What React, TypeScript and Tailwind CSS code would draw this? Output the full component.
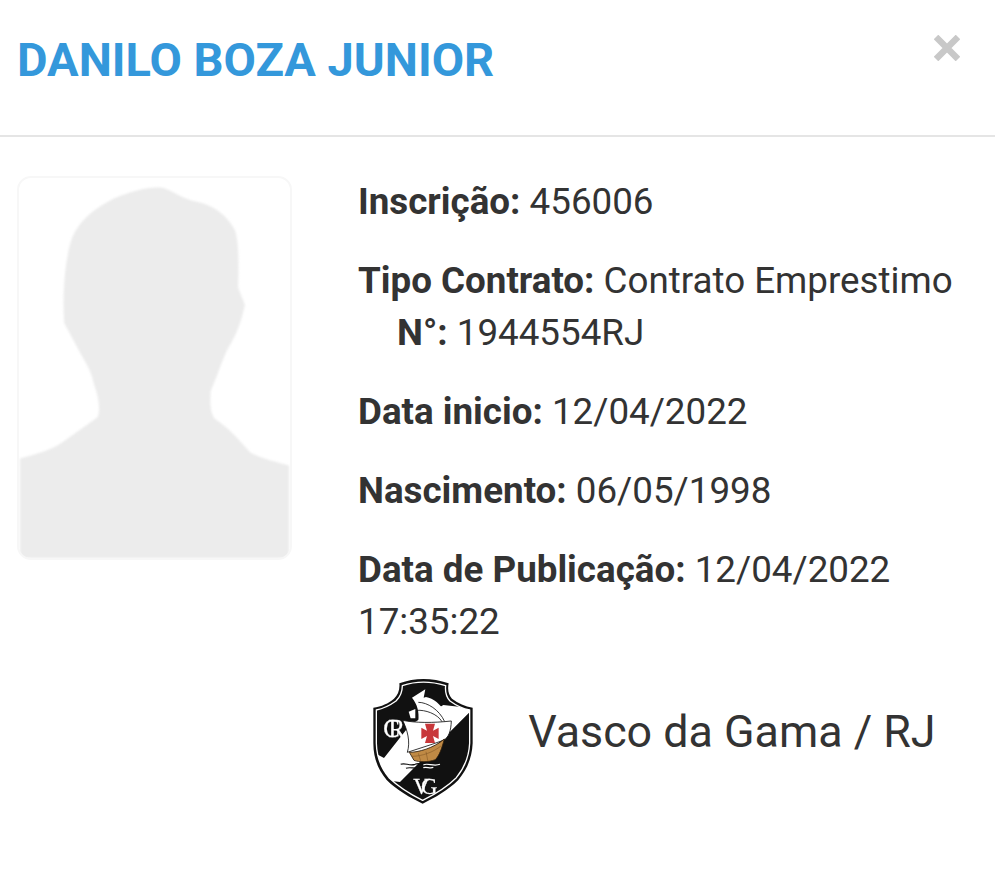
function Silhouette() {
  return (
    <svg viewBox="57 38 811 1146" className="h-full w-full blur-[1px]">
      <path
        fill="#ececec"
        d="M57 884 C100 872 150 860 185 835 L290 760 C300 740 295 700 280 660 C270 610 250 590 225 540 L190 475 C185 400 190 300 210 230 C230 170 280 130 340 100 C390 78 450 62 490 68 C520 78 545 100 590 110 C640 120 680 150 705 195 C720 240 715 320 715 370 L735 420 C725 470 710 510 685 550 C665 590 650 640 632 680 C630 720 630 745 645 765 C690 795 720 830 750 865 C785 885 830 895 868 905 L868 1184 L57 1184 Z"
      />
    </svg>
  );
}

const shieldInner =
  "M157 62 C198 48 242 48 287 62 C285 80 289 96 300 108 C318 121 337 131 359 135 L359 235 C357 276 343 309 319 338 C291 366 254 388 218 406 C182 388 146 366 117 338 C93 309 80 276 79 235 L79 135 C100 131 120 121 138 108 C150 96 157 80 157 62 Z";

function Crest() {
  return (
    <svg viewBox="60 30 320 395" className="h-[131.67px] w-[106.67px] shrink-0 blur-[0.3px]">
      <defs>
        <clipPath id="shield">
          <path d={shieldInner} />
        </clipPath>
      </defs>
      <path
        fill="#111"
        d="M148 55 C195 38 245 38 296 55 C292 75 296 90 306 101 C325 115 345 125 368 128 L368 235 C366 280 350 315 325 345 C295 375 255 398 218 416 C180 398 140 375 110 345 C85 315 70 280 70 235 L70 128 C95 125 115 115 132 101 C144 90 150 75 148 55 Z"
      />
      <path fill="none" stroke="#fff" strokeWidth="4" d={shieldInner} />
      {/* diagonal band */}
      <path clipPath="url(#shield)" fill="#fff" d="M370 130 L150 351 L100 345 L70 262 L102 279 L180 180 L280 120 Z" />
      {/* upper sail + pennant */}
      <path fill="#fff" d="M186 98 L226 73 L221 98 L228 96 C250 100 272 118 284 140 C290 152 290 165 286 175 L205 168 C208 140 202 118 186 98 Z" />
      <path fill="#fff" d="M176 140 L196 132 L196 160 L182 160 Z" />
      {/* main sail */}
      <path fill="#fff" stroke="#111" strokeWidth="2.5" d="M158 166 C195 174 250 174 304 168 C303 198 296 218 280 226 L240 240 L172 262 C182 230 172 195 158 166 Z" />
      <path fill="none" stroke="#111" strokeWidth="2.5" d="M205 112 C232 112 268 134 284 170 M200 136 C225 134 262 146 276 170" />
      <path fill="#c8373a" d="M214 188 L231 197 L225 176 L255 176 L249 197 L266 188 L266 222 L249 213 L255 234 L225 234 L231 213 L214 222 Z" />
      {/* hull */}
      <path fill="#c08a45" stroke="#2a1a0a" strokeWidth="2.5" d="M178 262 C205 262 250 250 283 222 C276 250 268 272 256 284 C235 292 208 292 192 286 Z" />
      <path fill="none" stroke="#7a4f20" strokeWidth="1.5" d="M186 274 C215 274 250 262 274 242 M205 265 L212 288 M228 260 L234 290" />
      {/* waves */}
      <path fill="none" stroke="#111" strokeWidth="3.5" d="M152 298 C165 292 178 304 195 298 C205 294 212 296 220 300 M168 310 C180 304 195 314 220 308" />
      <path fill="none" stroke="#fff" strokeWidth="3.5" d="M220 300 C232 292 250 306 270 298 M220 308 C230 304 240 312 250 307" />
      <text x="100" y="216" fill="#fff" stroke="#fff" strokeWidth="0.8" fontFamily="Liberation Serif, serif" fontSize="74" letterSpacing="-34">CR</text>
      <text x="190" y="386" fill="#fff" stroke="#fff" strokeWidth="0.8" fontFamily="Liberation Serif, serif" fontSize="68" letterSpacing="-26">VG</text>
    </svg>
  );
}

function App() {
  return (
    <div className="h-[869px] w-[995px] overflow-hidden bg-white font-['Roboto',sans-serif] text-[36.75px] leading-[52.5px] text-[#333]">
      <div className="flex h-[137px] justify-between border-b-2 border-[#e5e5e5] pl-[17px] pr-[35px] pt-[30px]">
        <h4 className="text-[47px] font-bold leading-[60px] text-[#3498db]">DANILO BOZA JUNIOR</h4>
        <svg viewBox="0 0 26 26" className="mt-[5px] h-[26px] w-[26px]">
          <path stroke="#c8c8c8" strokeWidth="6.5" d="M2 2 L24 24 M24 2 L2 24" />
        </svg>
      </div>
      <div className="flex pl-[17px] pt-[39px]">
        <div className="h-[384px] w-[275px] overflow-hidden rounded-[14px] border-2 border-[#f7f7f7] bg-white">
          <Silhouette />
        </div>
        <div className="ml-[66px] w-[620px]">
          <p className="mb-[26.25px]">
            <b className="font-bold">Inscrição:</b> 456006
          </p>
          <p className="mb-[26.25px]">
            <b className="font-bold">Tipo Contrato:</b> Contrato Emprestimo
            <span className="block pl-[39px]">
              <b className="font-bold">N°:</b> 1944554RJ
            </span>
          </p>
          <p className="mb-[26.25px]">
            <b className="font-bold">Data inicio:</b> 12/04/2022
          </p>
          <p className="mb-[26.25px]">
            <b className="font-bold">Nascimento:</b> 06/05/1998
          </p>
          <p className="mb-[26.25px]">
            <b className="font-bold">Data de Publicação:</b> 12/04/2022
            <br />
            17:35:22
          </p>
          <div className="ml-[11.5px] flex items-start">
            <Crest />
            <span className="ml-[52px] mt-[27px] text-[44.8px] leading-[60px]">Vasco da Gama / RJ</span>
          </div>
        </div>
      </div>
    </div>
  );
}

export default App;
